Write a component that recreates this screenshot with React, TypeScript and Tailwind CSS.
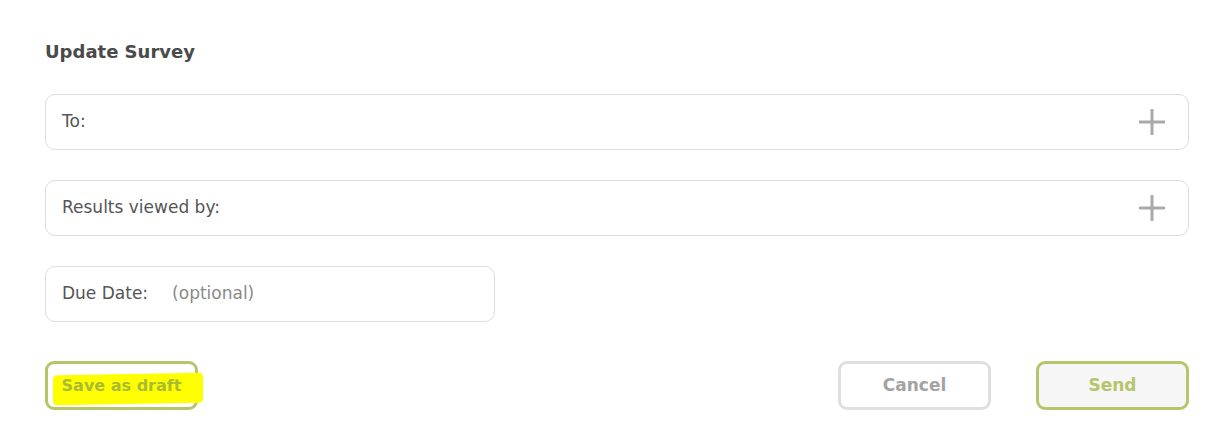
import React from "react";

const PlusIcon = () => (
  <svg width="28" height="28" viewBox="0 0 28 28" className="shrink-0">
    <path d="M14 1v26M1 14h26" stroke="#a9a9a9" strokeWidth="3" fill="none" />
  </svg>
);

const Field = ({ label }: { label: string }) => (
  <div className="flex h-[56px] w-full items-center justify-between rounded-[10px] border border-[#dcdcdc] pl-4 pr-[22px]">
    <span className="text-[17px] text-[#555555]">{label}</span>
    <PlusIcon />
  </div>
);

export default function App() {
  return (
    <div
      className="h-[440px] w-[1228px] bg-white px-[45px] pt-[40px]"
      style={{ fontFamily: '"DejaVu Sans", "Liberation Sans", sans-serif' }}
    >
      <h1 className="text-[18px] font-bold leading-6 text-[#4a4a4a]">Update Survey</h1>

      <div className="mt-[30px] flex w-[1144px] flex-col gap-[30px]">
        <Field label="To:" />
        <Field label="Results viewed by:" />
        <div className="flex h-[56px] w-[450px] items-center rounded-[10px] border border-[#dcdcdc] pl-4">
          <span className="text-[17px] text-[#555555]">Due Date:</span>
          <span className="ml-[24px] text-[17px] text-[#8a8a8a]">(optional)</span>
        </div>
      </div>

      <div className="mt-[39px] flex w-[1144px] items-center">
        <button className="relative flex h-[49px] w-[153px] items-center justify-center rounded-[9px] border-[3px] border-[#b7c56a] bg-white">
          <span className="absolute left-[5px] top-[10px] h-[30px] w-[150px] -skew-y-1 rounded-sm bg-[#ffff00]" />
          <span className="relative text-[16px] font-bold text-[#a9bb34]">Save as draft</span>
        </button>
        <div className="flex-1" />
        <button className="flex h-[49px] w-[153px] items-center justify-center rounded-[9px] border-[3px] border-[#dedfdf] bg-white text-[17px] font-bold text-[#a3a3a3]">
          Cancel
        </button>
        <button className="ml-[45px] flex h-[49px] w-[153px] items-center justify-center rounded-[9px] border-[3px] border-[#b7c56a] bg-[#f5f6f5] text-[17px] font-bold text-[#b7c56a]">
          Send
        </button>
      </div>
    </div>
  );
}
